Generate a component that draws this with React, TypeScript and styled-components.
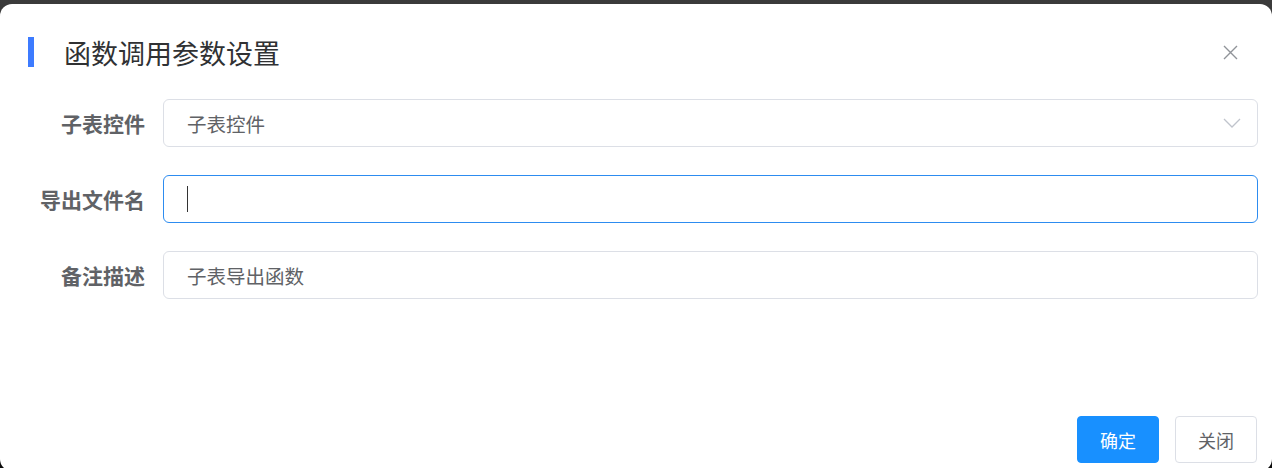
import styled, { createGlobalStyle } from 'styled-components'

const GlobalStyle = createGlobalStyle`
    html, body {
        margin: 0;
        padding: 0;
        background: linear-gradient(#3b3b3b, #0c0c0c);
        height: 468px;
        overflow: hidden;
    }

    body {
        font-family: 'Noto Sans CJK SC', 'Noto Sans', sans-serif;
    }
`

const Dialog = styled.div`
    background-color: #fff;
    border-radius: 12px;
    box-sizing: border-box;
    display: flex;
    flex-direction: column;
    height: 467px;
    margin-top: 4px;
    width: 1272px;
`

const Header = styled.div`
    align-items: center;
    display: flex;
    height: 48px;
    padding: 24px 34px 0 28px;
`

const TitleBar = styled.span`
    background-color: #3d7bff;
    height: 30px;
    width: 6px;
`

const Title = styled.h2`
    color: #303133;
    flex: 1;
    font-size: 27px;
    font-weight: 400;
    line-height: 1;
    margin: 0 0 0 30px;
`

const CloseBtn = styled.button`
    align-items: center;
    background: none;
    border: none;
    cursor: pointer;
    display: flex;
    height: 15px;
    justify-content: center;
    padding: 0;
    width: 15px;
`

const Form = styled.div`
    display: grid;
    grid-auto-rows: 48px;
    grid-template-columns: 145px 1fr;
    column-gap: 18px;
    row-gap: 28px;
    margin-top: 23px;
    padding-right: 14px;
`

const Label = styled.label`
    align-items: center;
    color: #606266;
    display: flex;
    font-size: 21px;
    font-weight: 700;
    justify-content: flex-end;
`

const Field = styled.div<{ $focused?: boolean }>`
    align-items: center;
    border: 1px solid ${(p) => (p.$focused ? '#2d8cf0' : '#dcdfe6')};
    border-radius: 6px;
    box-sizing: border-box;
    color: #606266;
    display: flex;
    font-size: 19.5px;
    padding: 0 16px 0 23px;
`

const FieldText = styled.span`
    flex: 1;
`

const Caret = styled.span`
    background-color: #333;
    display: block;
    height: 26px;
    width: 1px;
`

const Footer = styled.div`
    display: flex;
    gap: 16px;
    justify-content: flex-end;
    margin-top: 117px;
    padding-right: 15px;
`

const Button = styled.button<{ $primary?: boolean }>`
    background-color: ${(p) => (p.$primary ? '#1890ff' : '#fff')};
    border: 1px solid ${(p) => (p.$primary ? '#1890ff' : '#dcdfe6')};
    border-radius: 4px;
    color: ${(p) => (p.$primary ? '#fff' : '#606266')};
    cursor: pointer;
    font-family: inherit;
    font-size: 18px;
    height: 47px;
    padding: 0;
    width: 82px;
`

const ChevronDown = () => (
    <svg width="18" height="10" viewBox="0 0 18 10" fill="none">
        <path d="M1 1l8 8 8-8" stroke="#c0c4cc" strokeWidth="1.3" />
    </svg>
)

const CloseIcon = () => (
    <svg width="15" height="15" viewBox="0 0 15 15" fill="none">
        <path d="M1 1l13 13M14 1L1 14" stroke="#909399" strokeWidth="1.4" />
    </svg>
)

const App = () => {
    return (
        <>
            <GlobalStyle />
            <Dialog>
                <Header>
                    <TitleBar />
                    <Title>函数调用参数设置</Title>
                    <CloseBtn aria-label="close">
                        <CloseIcon />
                    </CloseBtn>
                </Header>
                <Form>
                    <Label>子表控件</Label>
                    <Field>
                        <FieldText>子表控件</FieldText>
                        <ChevronDown />
                    </Field>
                    <Label>导出文件名</Label>
                    <Field $focused>
                        <Caret />
                    </Field>
                    <Label>备注描述</Label>
                    <Field>
                        <FieldText>子表导出函数</FieldText>
                    </Field>
                </Form>
                <Footer>
                    <Button $primary>确定</Button>
                    <Button>关闭</Button>
                </Footer>
            </Dialog>
        </>
    )
}

export default App
